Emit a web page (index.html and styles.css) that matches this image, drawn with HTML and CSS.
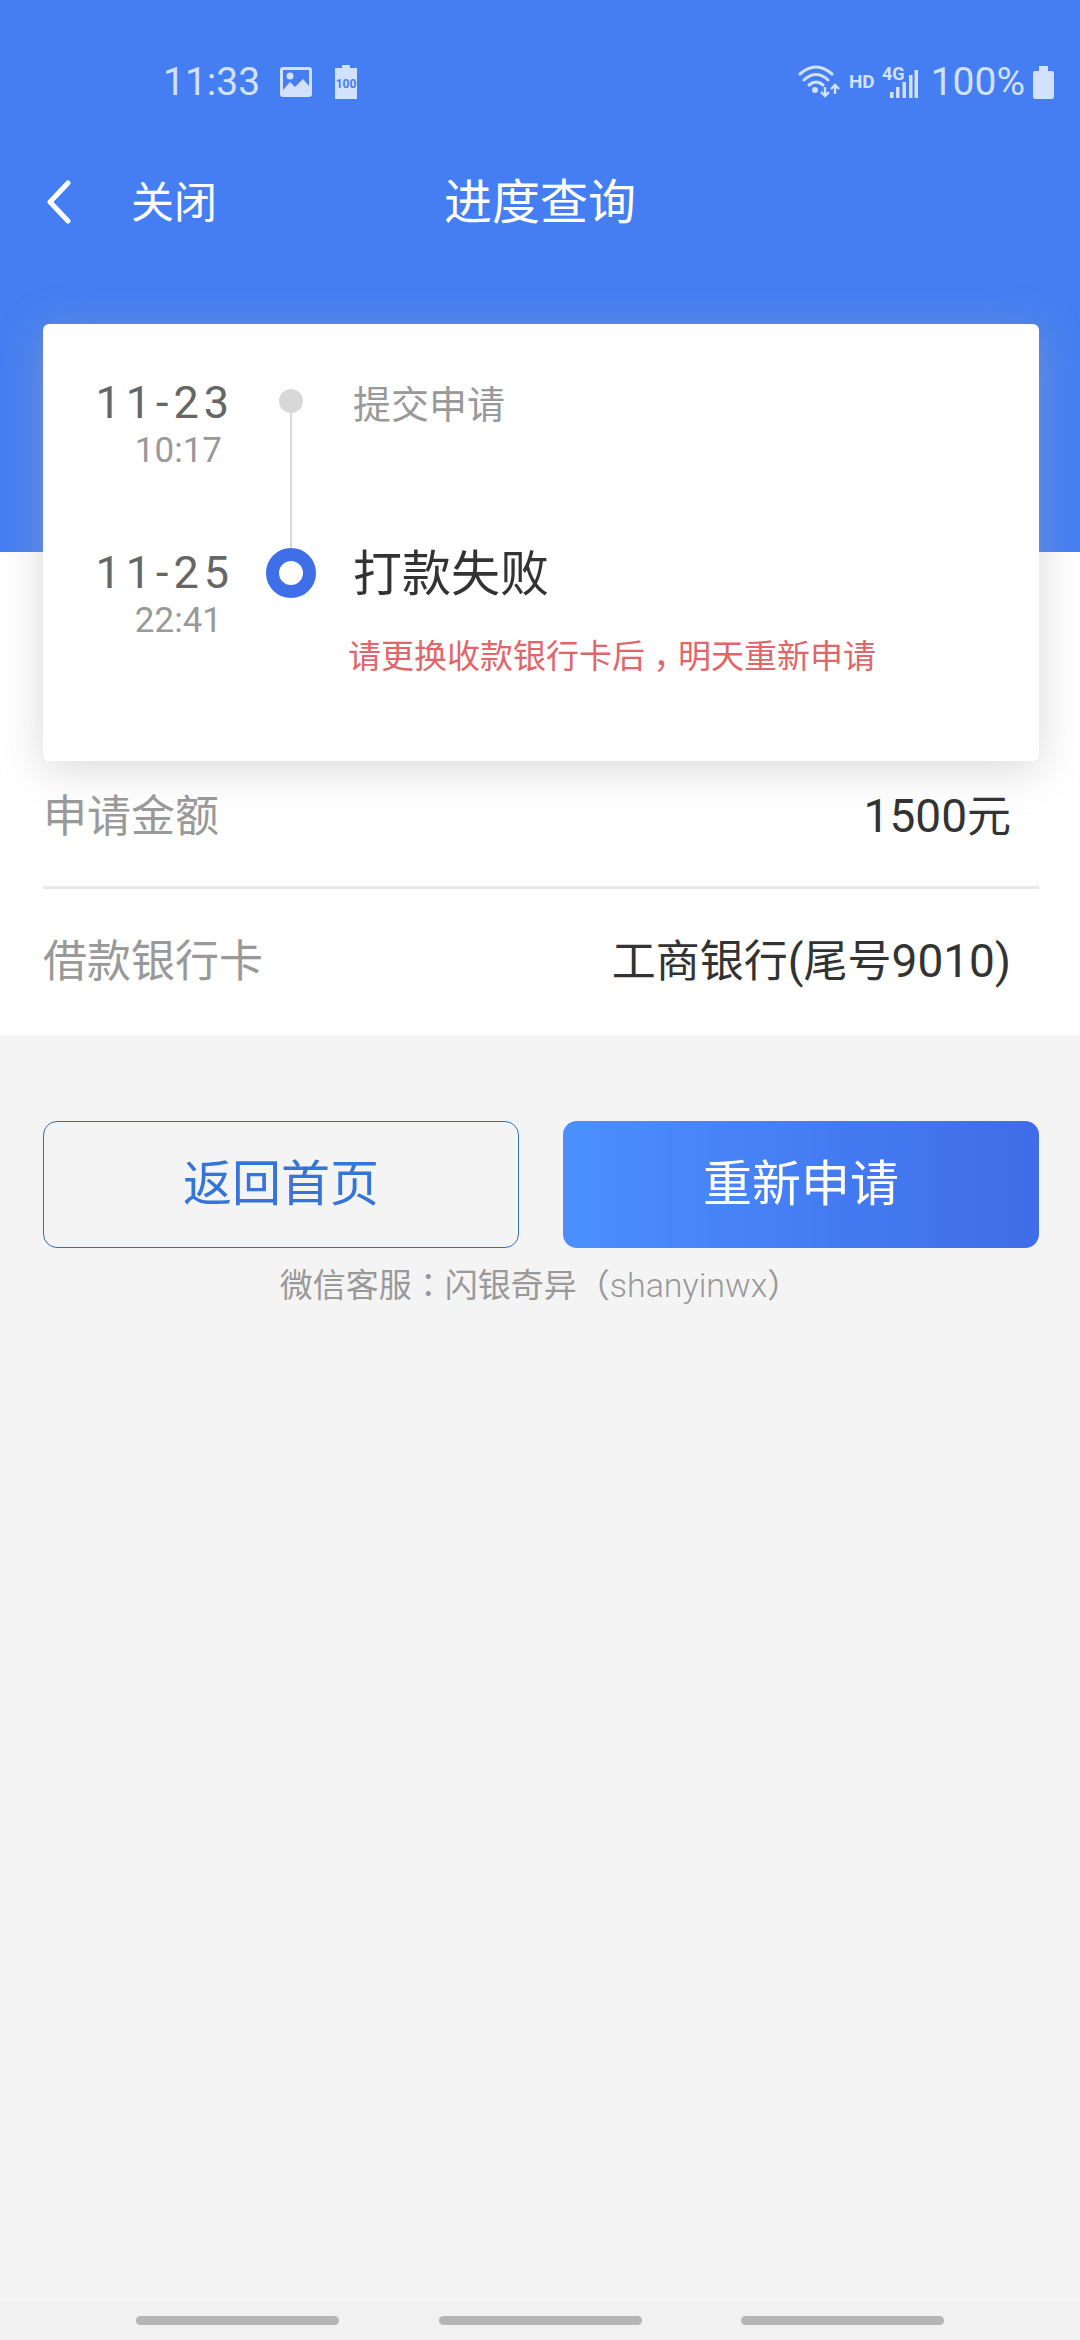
FILE: index.html
```html
<!DOCTYPE html>
<html lang="zh-CN">
<head>
<meta charset="utf-8">
<meta name="viewport" content="width=device-width, initial-scale=1">
<title>进度查询</title>
<link rel="stylesheet" href="styles.css">
</head>
<body>
<header class="hero">
  <div class="status">
    <div class="status-left">
      <span class="status-text">11:33</span>
      <svg class="icon-photo" width="32" height="30" viewBox="0 0 32 30" aria-hidden="true">
        <path fill="currentColor" fill-rule="evenodd" d="M3 0H29Q32 0 32 3V27Q32 30 29 30H3Q0 30 0 27V3Q0 0 3 0ZM3 3V23L10 15L15 20L23 12L29 19V3Z"/>
        <circle cx="10" cy="9" r="3.5" fill="currentColor"/>
      </svg>
      <svg class="icon-charge" width="24" height="34" viewBox="0 0 24 34" aria-hidden="true">
        <path fill="currentColor" d="M8 0H16V3H23V34H1V3H8Z"/>
        <text class="charge-text" x="12" y="23" text-anchor="middle">100</text>
      </svg>
    </div>
    <div class="status-right">
      <svg class="icon-wifi" width="42" height="34" viewBox="0 0 42 34" aria-hidden="true">
        <g fill="none" stroke="currentColor" stroke-width="3" stroke-linecap="round">
          <path d="M2 9Q18 -5 34 9"/>
          <path d="M6 15Q18 4 30 15"/>
          <path d="M11 20Q18 14 25 20"/>
        </g>
        <circle cx="17" cy="25" r="3" fill="currentColor"/>
        <path fill="none" stroke="currentColor" stroke-width="2.4" d="M27 22V31M23 27L27 31L31 27M37 29V20M33 24L37 20L41 24"/>
      </svg>
      <span class="status-hd">HD</span>
      <svg class="icon-signal" width="37" height="38" viewBox="0 -4 37 38" aria-hidden="true">
        <text class="signal-text" x="0" y="13">4G</text>
        <path fill="currentColor" d="M8 25h3.500v6H8zM14 20h3.500v11H14zM20.500 15h3.500v16h-3.500zM27 8h3.500v23H27zM32.500 3h3.500v28h-3.500z"/>
      </svg>
      <span class="status-text">100%</span>
      <svg class="icon-battery" width="21" height="33" viewBox="0 0 21 33" aria-hidden="true">
        <path fill="currentColor" d="M6 0H15V5H19Q21 5 21 7V31Q21 33 19 33H2Q0 33 0 31V7Q0 5 2 5H6Z"/>
      </svg>
    </div>
  </div>
  <nav class="navbar">
    <div class="nav-actions">
      <button class="back" type="button" aria-label="返回">
        <svg width="26" height="44" viewBox="0 0 26 44" aria-hidden="true">
          <path fill="none" stroke="currentColor" stroke-width="5" stroke-linecap="round" stroke-linejoin="round" d="M23 3L5 22L23 41"/>
        </svg>
      </button>
      <button class="close" type="button">关闭</button>
    </div>
    <h1 class="title">进度查询</h1>
  </nav>
</header>

<main class="sheet">
  <ol class="card">
    <li class="step">
      <div class="when"><span class="date">11-23</span><span class="time">10:17</span></div>
      <div class="marker"><span class="dot"></span><span class="line"></span></div>
      <div class="what"><span class="step-name">提交申请</span></div>
    </li>
    <li class="step step-last">
      <div class="when"><span class="date">11-25</span><span class="time">22:41</span></div>
      <div class="marker"><span class="ring"></span></div>
      <div class="what">
        <span class="step-name step-current">打款失败</span>
        <p class="notice">请更换收款银行卡后<span class="comma">，</span>明天重新申请</p>
      </div>
    </li>
  </ol>
  <dl class="details">
    <div class="row"><dt>申请金额</dt><dd><span class="num">1500</span>元</dd></div>
    <div class="row"><dt>借款银行卡</dt><dd>工商银行<span class="num">(</span>尾号<span class="num">9010)</span></dd></div>
  </dl>
</main>

<section class="actions">
  <button class="btn btn-outline" type="button">返回首页</button>
  <button class="btn btn-primary" type="button">重新申请</button>
</section>
<p class="service">微信客服<span class="colon" lang="zh-TW">：</span>闪银奇异（<span class="account">shanyinwx</span>）</p>

<div class="gesture-bar"><span class="pill"></span><span class="pill"></span><span class="pill"></span></div>
</body>
</html>
```
FILE: styles.css
```css
* {
  box-sizing: border-box;
  margin: 0;
  padding: 0;
}

body {
  display: flex;
  flex-direction: column;
  min-height: 100vh;
  background: #f4f4f4;
  color: #333;
  font-family: Roboto, "Noto Sans CJK SC", sans-serif;
}

button {
  border: 0;
  background: none;
  color: inherit;
  font-family: inherit;
  cursor: pointer;
}

.hero {
  padding: 60px 0 300px;
  background: #447ef2;
  color: #fff;
}

/* status bar */
.status {
  display: flex;
  justify-content: space-between;
  height: 44px;
  padding: 0 26px 0 163px;
  color: #d2e1ff;
}

.status-left,
.status-right {
  display: flex;
  align-items: center;
}

.status-text {
  font-size: 39px;
  line-height: 44px;
}

.icon-photo { margin-left: 20px; }
.icon-charge { margin-left: 22px; }

.charge-text {
  fill: #447ef2;
  font-size: 12px;
  font-weight: 700;
}

.status-hd {
  margin-left: 9px;
  font-size: 19px;
  font-weight: 700;
  line-height: 44px;
}

.icon-signal { margin: 0 12px 0 7px; }

.signal-text {
  fill: currentColor;
  font-size: 18px;
  font-weight: 700;
}

.icon-battery { margin-left: 8px; }

/* navigation bar */
.navbar {
  display: grid;
  grid-template-columns: 1fr auto 1fr;
  align-items: center;
  height: 100px;
  margin-top: 48px;
  padding: 0 43px;
}

.nav-actions {
  display: flex;
  align-items: center;
  gap: 58px;
}

.back {
  width: 30px;
  height: 44px;
}

.close {
  padding-top: 2px;
  font-size: 43px;
  line-height: 60px;
}

.title {
  padding-top: 2px;
  font-size: 48px;
  font-weight: 400;
  line-height: 60px;
}

/* progress card */
.sheet {
  display: flex;
  flex-direction: column;
  padding: 0 41px 0 43px;
  background: #fff;
}

.card {
  margin-top: -228px;
  padding: 51px 40px 84px 0;
  border-radius: 6px;
  background: #fff;
  box-shadow: 0 8px 44px rgba(170, 170, 170, 0.45);
  list-style: none;
}

.step {
  display: grid;
  grid-template-columns: 191px 114px 1fr;
  min-height: 170px;
}

.step-last { min-height: 0; }

.when {
  display: flex;
  flex-direction: column;
  align-items: flex-end;
}

.date {
  color: #666;
  font-size: 45px;
  letter-spacing: 5px;
  line-height: 56px;
}

.time {
  padding-right: 12px;
  color: #999;
  font-size: 35px;
  line-height: 40px;
}

.marker {
  display: flex;
  flex-direction: column;
  align-items: center;
}

.dot {
  width: 24px;
  height: 24px;
  margin-top: 14px;
  border-radius: 50%;
  background: #d8d8d8;
}

.line {
  flex: 1;
  width: 2px;
  margin-bottom: -3px;
  background: #d8d8d8;
}

.ring {
  width: 50px;
  height: 50px;
  margin-top: 3px;
  border: 13px solid #3f6fe8;
  border-radius: 50%;
}

.what {
  display: flex;
  flex-direction: column;
  gap: 34px;
}

.step-name {
  padding: 2px 0 0 5px;
  color: #999;
  font-size: 38px;
  line-height: 56px;
}

.step-current {
  color: #333;
  font-size: 49px;
}

.notice {
  color: #e0666a;
  font-size: 33px;
  line-height: 40px;
}

/* half-width comma centred in a full character cell */
.comma {
  display: inline-block;
  width: 1em;
  font-feature-settings: "halt";
  text-align: center;
}

/* application details */
.details {
  padding: 26px 0 43px;
  font-size: 44px;
  line-height: 60px;
}

.row {
  display: flex;
  justify-content: space-between;
  padding-right: 28px;
}

.row + .row {
  margin-top: 39px;
  padding-top: 43px;
  border-top: 3px solid #e8e8e8;
}

.row dt { color: #999; }

.num {
  font-size: 46px;
  line-height: 1;
}

/* buttons */
.actions {
  display: grid;
  grid-template-columns: 1fr 1fr;
  gap: 44px;
  padding: 86px 41px 0 43px;
}

.btn {
  height: 127px;
  border-radius: 14px;
  font-size: 49px;
  line-height: 60px;
}

.btn-outline {
  border: 1px solid #2f6fc0;
  color: #3574d8;
}

.btn-primary {
  background: linear-gradient(90deg, #4b8fff, #3f6ce8);
  color: #fff;
}

.service {
  margin-top: 18px;
  color: #999;
  font-size: 33px;
  line-height: 40px;
  text-align: center;
}

.colon {
  font-family: "Noto Sans CJK TC", sans-serif;
  line-height: 1;
}

.account {
  font-size: 34px;
  font-weight: 300;
  line-height: 1;
}

/* system gesture bar */
.gesture-bar {
  display: flex;
  justify-content: space-between;
  margin-top: auto;
  padding: 13px 136px 15px;
  background: #f1f1f1;
}

.pill {
  width: 203px;
  height: 9px;
  border-radius: 5px;
  background: #b5b5b5;
}
```
